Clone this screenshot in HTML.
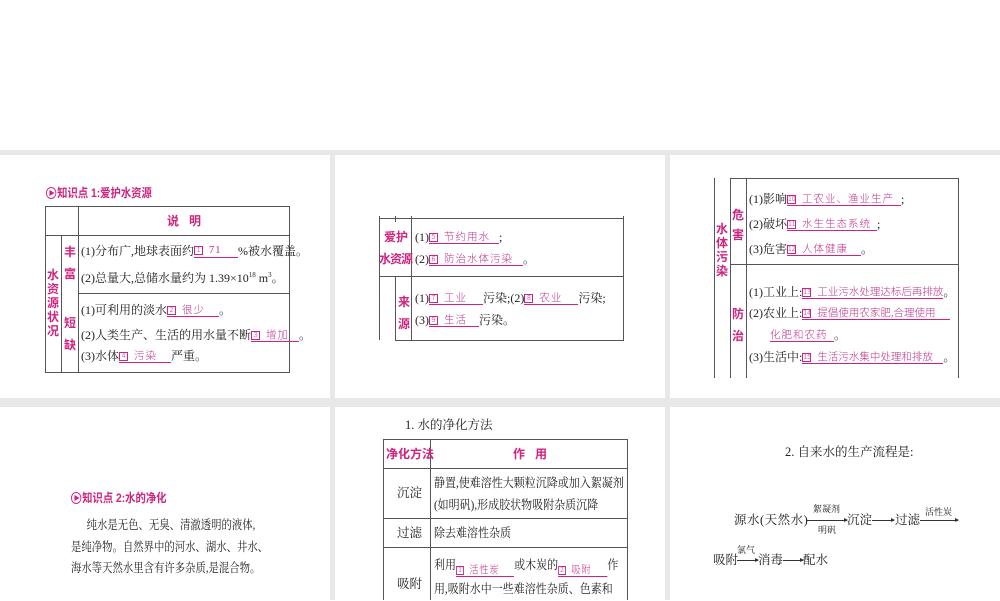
<!DOCTYPE html>
<html><head><meta charset="utf-8">
<style>
*{margin:0;padding:0;box-sizing:border-box}
body{width:1000px;height:600px;position:relative;background:#fff;overflow:hidden;font-family:"Liberation Serif","Noto Serif CJK SC",serif;font-size:12px;color:#222}
.bg{position:absolute;left:0;top:150px;width:1000px;height:450px;background:#e8e8e8}
.p{position:absolute;background:#fff}
.a{position:absolute;white-space:nowrap;line-height:14px}
.sx{transform:scaleX(0.86);transform-origin:left top}
.pk{color:#d0237f;font-family:"Liberation Sans","Noto Sans CJK SC",sans-serif;font-weight:bold}
.hl{position:absolute;height:1px;background:#555}
.vl{position:absolute;width:1px;background:#555}
.ar{position:absolute;height:1px;background:#333}
.ar:after{content:"";position:absolute;right:-1px;top:-2px;border-left:4px solid #333;border-top:2.5px solid transparent;border-bottom:2.5px solid transparent}
.u{display:inline-block;border-bottom:1px solid #d0237f;color:#c0308a;font-size:10.5px;font-family:"Noto Sans CJK SC",sans-serif;font-weight:300;letter-spacing:1px;line-height:13px;overflow:hidden;white-space:nowrap;vertical-align:bottom}
.n{display:inline-block;border:1px solid #d0237f;color:#d0237f;font-size:7px;width:9px;height:9px;line-height:7px;text-align:center;vertical-align:1px;margin-right:6px;letter-spacing:0}
.ic{display:inline-block;width:12px;height:12px;border:1.5px solid #d0237f;border-radius:50%;position:relative;vertical-align:-2px;margin-right:1px}
.ic:after{content:"";position:absolute;left:3px;top:1.5px;border-left:6px solid #d0237f;border-top:3.5px solid transparent;border-bottom:3.5px solid transparent}
.vt{position:absolute;width:14px;text-align:center;line-height:14px;white-space:normal}
</style></head><body>
<div class="bg"></div>
<div class="p" style="left:0;top:155px;width:330px;height:243px"></div>
<div class="p" style="left:335px;top:155px;width:330px;height:243px"></div>
<div class="p" style="left:670px;top:155px;width:330px;height:243px"></div>
<div class="p" style="left:0;top:407px;width:330px;height:193px"></div>
<div class="p" style="left:335px;top:407px;width:330px;height:193px"></div>
<div class="p" style="left:670px;top:407px;width:330px;height:193px"></div>

<!-- Panel 1 -->
<div class="a pk sx" style="left:46px;top:186px;font-size:12px"><span class="ic"></span>知识点 1:爱护水资源</div>
<div class="hl" style="left:45px;top:206px;width:245px"></div>
<div class="hl" style="left:45px;top:235px;width:245px"></div>
<div class="hl" style="left:78px;top:293px;width:212px"></div>
<div class="hl" style="left:45px;top:372px;width:245px"></div>
<div class="vl" style="left:45px;top:206px;height:167px"></div>
<div class="vl" style="left:61px;top:235px;height:137px"></div>
<div class="vl" style="left:78px;top:206px;height:167px"></div>
<div class="vl" style="left:289px;top:206px;height:167px"></div>
<div class="a pk" style="left:167px;top:214px">说&nbsp;&nbsp;&nbsp;明</div>
<div class="vt pk" style="left:46px;top:268px">水资源状况</div>
<div class="vt pk" style="left:63px;top:241px;line-height:22px">丰富</div>
<div class="vt pk" style="left:63px;top:312px;line-height:22px">短缺</div>
<div class="a" style="left:81px;top:243px">(1)分布广,地球表面约<span class="u" style="width:44px"><span class="n">1</span><b style="color:#d0237f;font-family:'Liberation Serif'">71</b></span>%被水覆盖。</div>
<div class="a" style="left:81px;top:268px">(2)总量大,总储水量约为 1.39×10<sup style="font-size:7px">18</sup> m<sup style="font-size:7px">3</sup>。</div>
<div class="a" style="left:81px;top:303px">(1)可利用的淡水<span class="u" style="width:52px"><span class="n">2</span>很少</span>。</div>
<div class="a" style="left:81px;top:328px">(2)人类生产、生活的用水量不断<span class="u" style="width:48px"><span class="n">3</span>增加</span>。</div>
<div class="a" style="left:81px;top:349px">(3)水体<span class="u" style="width:52px"><span class="n">4</span>污染</span>严重。</div>

<!-- Panel 2 -->
<div class="hl" style="left:379px;top:218px;width:245px"></div>
<div class="hl" style="left:379px;top:276px;width:245px"></div>
<div class="hl" style="left:395px;top:340px;width:229px"></div>
<div class="vl" style="left:379px;top:216px;height:124px"></div>
<div class="vl" style="left:395px;top:216px;height:6px"></div>
<div class="vl" style="left:395px;top:276px;height:64px"></div>
<div class="vl" style="left:411px;top:216px;height:124px"></div>
<div class="vl" style="left:623px;top:216px;height:124px"></div>
<div class="a pk" style="left:384px;top:230px">爱护</div>
<div class="a pk" style="left:379px;top:252px;letter-spacing:-1px">水资源</div>
<div class="vt pk" style="left:397px;top:291px;line-height:22px">来源</div>
<div class="a" style="left:415px;top:230px">(1)<span class="u" style="width:70px"><span class="n">5</span>节约用水</span>;</div>
<div class="a" style="left:415px;top:252px">(2)<span class="u" style="width:94px"><span class="n">6</span>防治水体污染</span>。</div>
<div class="a" style="left:415px;top:291px">(1)<span class="u" style="width:54px"><span class="n">7</span>工业</span>污染;(2)<span class="u" style="width:54px"><span class="n">8</span>农业</span>污染;</div>
<div class="a" style="left:415px;top:313px">(3)<span class="u" style="width:50px"><span class="n">9</span>生活</span>污染。</div>

<!-- Panel 3 -->
<div class="hl" style="left:730px;top:178px;width:229px"></div>
<div class="hl" style="left:730px;top:264px;width:229px"></div>
<div class="vl" style="left:714px;top:178px;height:200px"></div>
<div class="vl" style="left:730px;top:178px;height:200px"></div>
<div class="vl" style="left:746px;top:178px;height:200px"></div>
<div class="vl" style="left:958px;top:178px;height:200px"></div>
<div class="vt pk" style="left:715px;top:222px">水体污染</div>
<div class="vt pk" style="left:731px;top:205px;line-height:20px">危害</div>
<div class="vt pk" style="left:731px;top:303px;line-height:22px">防治</div>
<div class="a" style="left:749px;top:192px">(1)影响<span class="u" style="width:114px"><span class="n">10</span>工农业、渔业生产</span>;</div>
<div class="a" style="left:749px;top:217px">(2)破坏<span class="u" style="width:90px"><span class="n">11</span>水生生态系统</span>;</div>
<div class="a" style="left:749px;top:242px">(3)危害<span class="u" style="width:74px"><span class="n">12</span>人体健康</span>。</div>
<div class="a" style="left:749px;top:285px">(1)工业上:<span class="u" style="width:141px;letter-spacing:0"><span class="n">13</span>工业污水处理达标后再排放</span>。</div>
<div class="a" style="left:749px;top:306px">(2)农业上:<span class="u" style="width:148px;letter-spacing:0"><span class="n">14</span>提倡使用农家肥,合理使用</span></div>
<div class="a" style="left:770px;top:328px"><span class="u" style="width:64px">化肥和农药</span>。</div>
<div class="a" style="left:749px;top:350px">(3)生活中:<span class="u" style="width:141px;letter-spacing:0"><span class="n">15</span>生活污水集中处理和排放</span>。</div>

<!-- Panel 4 -->
<div class="a pk sx" style="left:71px;top:491px"><span class="ic"></span>知识点 2:水的净化</div>
<div class="a" style="left:71px;top:515px;font-size:12.5px;line-height:21.5px;transform:scaleX(0.83);transform-origin:left top">&nbsp;&nbsp;&nbsp;&nbsp;&nbsp;&nbsp;纯水是无色、无臭、清澈透明的液体,<br>是纯净物。自然界中的河水、湖水、井水、<br>海水等天然水里含有许多杂质,是混合物。</div>

<!-- Panel 5 -->
<div class="a" style="left:405px;top:418px;font-size:12.5px">1. 水的净化方法</div>
<div class="hl" style="left:383px;top:439px;width:245px"></div>
<div class="hl" style="left:383px;top:468px;width:245px"></div>
<div class="hl" style="left:383px;top:518px;width:245px"></div>
<div class="hl" style="left:383px;top:547px;width:245px"></div>
<div class="vl" style="left:383px;top:439px;height:161px"></div>
<div class="vl" style="left:430px;top:439px;height:161px"></div>
<div class="vl" style="left:627px;top:439px;height:161px"></div>
<div class="a pk" style="left:386px;top:447px">净化方法</div>
<div class="a pk" style="left:513px;top:447px">作&nbsp;&nbsp;&nbsp;用</div>
<div class="a" style="left:397px;top:486px;font-size:12.5px">沉淀</div>
<div class="a" style="left:434px;top:472px;font-size:12.5px;line-height:22px;transform:scaleX(0.88);transform-origin:left top">静置,使难溶性大颗粒沉降或加入絮凝剂<br>(如明矾),形成胶状物吸附杂质沉降</div>
<div class="a" style="left:397px;top:526px;font-size:12.5px">过滤</div>
<div class="a" style="left:434px;top:526px;font-size:12.5px;transform:scaleX(0.88);transform-origin:left top">除去难溶性杂质</div>
<div class="a" style="left:397px;top:577px;font-size:12.5px">吸附</div>
<div class="a" style="left:434px;top:553px;font-size:12.5px;line-height:24px;transform:scaleX(0.88);transform-origin:left top">利用<span class="u" style="width:66px"><span class="n">1</span>活性炭</span>或木炭的<span class="u" style="width:56px"><span class="n">2</span>吸附</span>作<br>用,吸附水中一些难溶性杂质、色素和</div>

<!-- Panel 6 -->
<div class="a" style="left:785px;top:445px;font-size:12.5px">2. 自来水的生产流程是:</div>
<div class="a" style="left:734px;top:513px;font-size:12.5px;letter-spacing:0.5px">源水(天然水)</div>
<div class="a" style="left:813px;top:502px;font-size:9px">絮凝剂</div>
<div class="a" style="left:818px;top:523px;font-size:9px">明矾</div>
<div class="ar" style="left:807px;top:520px;width:40px"></div>
<div class="a" style="left:847px;top:513px;font-size:12.5px">沉淀</div>
<div class="ar" style="left:872px;top:520px;width:22px"></div>
<div class="a" style="left:895px;top:513px;font-size:12.5px">过滤</div>
<div class="a" style="left:925px;top:505px;font-size:9px">活性炭</div>
<div class="ar" style="left:920px;top:520px;width:38px"></div>
<div class="a" style="left:713px;top:553px;font-size:12.5px">吸附</div>
<div class="a" style="left:737px;top:543px;font-size:9px">氯气</div>
<div class="ar" style="left:737px;top:560px;width:21px"></div>
<div class="a" style="left:758px;top:553px;font-size:12.5px">消毒</div>
<div class="ar" style="left:783px;top:560px;width:20px"></div>
<div class="a" style="left:803px;top:553px;font-size:12.5px">配水</div>
</body></html>
